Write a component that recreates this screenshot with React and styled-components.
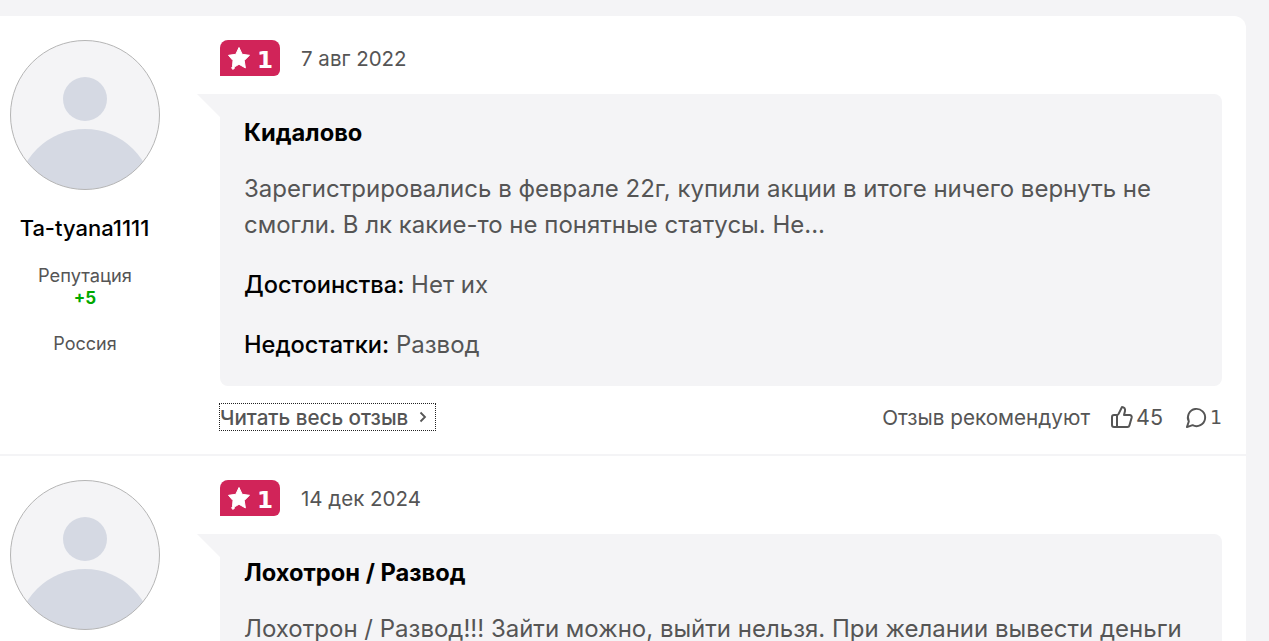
import styled, { createGlobalStyle } from "styled-components";

const GlobalStyle = createGlobalStyle`
  html, body {
    margin: 0;
    height: 100%;
    overflow: hidden;
    background: #f4f4f6;
    font-family: Inter, "Noto Sans", sans-serif;
  }
`;

const reviews = [
  {
    user: "Ta-tyana1111",
    rep: "+5",
    country: "Россия",
    date: "7 авг 2022",
    title: "Кидалово",
    text: "Зарегистрировались в феврале 22г, купили акции в итоге ничего вернуть не смогли. В лк какие-то не понятные статусы. Не...",
    pros: "Нет их",
    cons: "Развод",
    likes: 45,
    comments: 1,
  },
  {
    user: "",
    date: "14 дек 2024",
    title: "Лохотрон / Развод",
    text: "Лохотрон / Развод!!! Зайти можно, выйти нельзя. При желании вывести деньги",
  },
];

const Page = styled.div`
  padding-top: 16px;
  width: 1246px;
`;

const Card = styled.div`
  background: #fff;
  border-radius: 0 12px 0 0;
`;

const Review = styled.article`
  display: flex;
  padding: 24px 24px 23px 10px;
  & + & {
    border-top: 2px solid #f4f4f6;
  }
`;

const Side = styled.aside`
  width: 150px;
  flex: none;
  margin-right: 60px;
  text-align: center;
`;

const Avatar = styled.svg`
  display: block;
  width: 150px;
  height: 150px;
`;

const UserName = styled.div`
  margin: 26px 1px 0 0;
  font-size: 22px;
  line-height: 24px;
  font-weight: 500;
  color: #000;
`;

const Rep = styled.div`
  margin-top: 25px;
  font-size: 18.3px;
  line-height: 21px;
  color: #555;
`;

const RepValue = styled.div`
  margin-top: 2px;
  font-size: 17px;
  font-weight: 700;
  color: #00a800;
`;

const Country = styled.div`
  margin-top: 24px;
  font-size: 18px;
  line-height: 21px;
  color: #555;
`;

const Main = styled.div`
  flex: 1;
  min-width: 0;
`;

const Meta = styled.div`
  display: flex;
  align-items: center;
  gap: 21px;
  height: 36px;
  margin-bottom: 18px;
`;

const Badge = styled.div`
  display: flex;
  align-items: center;
  justify-content: center;
  gap: 6px;
  width: 60px;
  height: 36px;
  border-radius: 8px 8px 6px 0;
  background: #d12459;
  color: #fff;
`;

const Digit = styled.span`
  padding-top: 3px;
  font-family: "DejaVu Sans", sans-serif;
  font-size: 23px;
  font-weight: 700;
`;

const DateText = styled.span`
  font-size: 20.5px;
  color: #555;
`;

const Bubble = styled.div`
  position: relative;
  padding: 24px;
  border-radius: 0 8px 8px 8px;
  background: #f4f4f6;
  height: 244px;

  &::before {
    content: "";
    position: absolute;
    left: -23px;
    top: 0;
    border-top: 23px solid #f4f4f6;
    border-left: 23px solid transparent;
  }
`;

const Title = styled.h3`
  margin: 0 0 23px;
  font-size: 23.7px;
  line-height: 30px;
  font-weight: 700;
  color: #000;
`;

const Body = styled.p`
  margin: 0 0 24px;
  font-size: 24px;
  line-height: 36px;
  color: #555;
`;

const Line = styled.p`
  margin: 0 0 24px;
  font-size: 24px;
  line-height: 36px;
  color: #555;
  b {
    font-size: 23.6px;
    font-weight: 500;
    color: #000;
  }
`;

const Footer = styled.div`
  display: flex;
  justify-content: space-between;
  align-items: center;
  margin-top: 17px;
  height: 28px;
`;

const ReadMore = styled.a`
  display: flex;
  align-items: center;
  gap: 10px;
  height: 26px;
  padding-right: 7px;
  outline: 1px dotted #222;
  font-size: 20.6px;
  font-weight: 500;
  color: #555;
`;

const Stats = styled.div`
  display: flex;
  align-items: center;
  font-size: 20.7px;
  color: #555;
`;

const Stat = styled.span`
  display: flex;
  align-items: center;
  gap: ${(p) => p.$inner}px;
  margin-left: ${(p) => p.$gap}px;
  font-size: 21.5px;
`;

const CommentCount = styled.span`
  width: 12px;
  font-family: "DejaVu Sans", sans-serif;
  font-size: 19px;
`;

function Star() {
  return (
    <svg width="24" height="24" viewBox="0 0 24 24" fill="#fff">
      <path d="M12 1.500l3.200 6.800 7.300 1-5.300 5.200 1.200 7.400-6.400-3.600-4.900 2.800a1.300 1.300 0 1 1-1.600-.4l.5-6.200L1.500 9.300l7.300-1z" stroke="#fff" strokeWidth="1" strokeLinejoin="round" />
    </svg>
  );
}

function Person() {
  return (
    <Avatar viewBox="0 0 150 150">
      <defs>
        <clipPath id="round">
          <circle cx="75" cy="75" r="74.500" />
        </clipPath>
      </defs>
      <circle cx="75" cy="75" r="74.500" fill="#f4f4f6" />
      <g clipPath="url(#round)" fill="#d5d9e3">
        <circle cx="75" cy="59" r="22" />
        <ellipse cx="75" cy="157" rx="68" ry="68" />
      </g>
      <circle cx="75" cy="75" r="74.500" fill="none" stroke="#b5b5b5" />
    </Avatar>
  );
}

function Thumb() {
  return (
    <svg width="24" height="24" viewBox="0 0 24 24" fill="none" stroke="#555" strokeWidth="2" strokeLinecap="round" strokeLinejoin="round">
      <path d="M7 10v12" />
      <path d="M15 5.900 14 10h5.800a2 2 0 0 1 1.900 2.500l-2.300 8A2 2 0 0 1 17.500 22H4a2 2 0 0 1-2-2v-8a2 2 0 0 1 2-2h2.800a2 2 0 0 0 1.800-1.100L12 2a3.100 3.100 0 0 1 3 3.900z" />
    </svg>
  );
}

function Bubbles() {
  return (
    <svg width="23" height="23" viewBox="0 0 24 24" fill="none" stroke="#555" strokeWidth="2" strokeLinecap="round" strokeLinejoin="round">
      <path d="M7.900 20A9 9 0 1 0 4 16.100L2 22z" />
    </svg>
  );
}

function Chevron() {
  return (
    <svg width="10" height="12" viewBox="0 0 10 12" fill="none" stroke="#555" strokeWidth="1.800">
      <path d="M2.500 1.500 7 6l-4.500 4.500" />
    </svg>
  );
}

export default function App() {
  return (
    <Page>
      <GlobalStyle />
      <Card>
        {reviews.map((r) => (
          <Review key={r.title}>
            <Side>
              <Person />
              {r.user && (
                <>
                  <UserName>{r.user}</UserName>
                  <Rep>
                    Репутация
                    <RepValue>{r.rep}</RepValue>
                  </Rep>
                  <Country>{r.country}</Country>
                </>
              )}
            </Side>
            <Main>
              <Meta>
                <Badge>
                  <Star />
                  <Digit>1</Digit>
                </Badge>
                <DateText>{r.date}</DateText>
              </Meta>
              <Bubble>
                <Title>{r.title}</Title>
                <Body>{r.text}</Body>
                {r.pros && (
                  <Line>
                    <b>Достоинства:</b> {r.pros}
                  </Line>
                )}
                {r.cons && (
                  <Line>
                    <b>Недостатки:</b> {r.cons}
                  </Line>
                )}
              </Bubble>
              {r.likes && (
                <Footer>
                  <ReadMore>
                    Читать весь отзыв <Chevron />
                  </ReadMore>
                  <Stats>
                    Отзыв рекомендуют
                    <Stat $gap={20} $inner={2}>
                      <Thumb />
                      {r.likes}
                    </Stat>
                    <Stat $gap={22} $inner={2}>
                      <Bubbles />
                      <CommentCount>{r.comments}</CommentCount>
                    </Stat>
                  </Stats>
                </Footer>
              )}
            </Main>
          </Review>
        ))}
      </Card>
    </Page>
  );
}
